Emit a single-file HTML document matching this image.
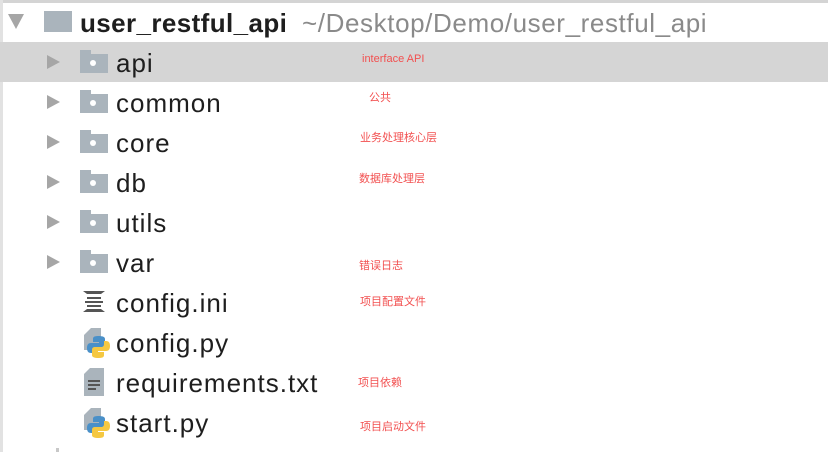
<!DOCTYPE html>
<html><head><meta charset="utf-8"><style>
body{margin:0;width:828px;height:452px;background:#fff;position:relative;overflow:hidden;font-family:"Liberation Sans","Noto Sans CJK SC",sans-serif;}
.top{position:absolute;left:0;top:0;width:828px;height:3px;background:#d4d4d4}
.left{position:absolute;left:0;top:0;width:3px;height:452px;background:#e2e2e2}
.hl{position:absolute;left:0;top:42px;width:828px;height:40px;background:#d5d5d5}
.row{position:absolute;height:40px;line-height:40px;font-size:26px;letter-spacing:1px;color:#1e1e1e;white-space:nowrap}
.tri{position:absolute;width:0;height:0;border-top:7px solid transparent;border-bottom:7px solid transparent;border-left:13px solid #a6a6a6}
.fold{position:absolute;width:28px;height:19px;background:#aab4bc}
.fold:before{content:"";position:absolute;left:0;top:-4px;width:11px;height:5px;background:#aab4bc}
.fold i{position:absolute;left:10px;top:6px;width:6px;height:6px;border-radius:50%;background:#fff}
.ann{position:absolute;font-size:11px;color:#f25050}
</style></head><body>
<div class="top"></div><div class="left"></div><div class="hl"></div>
<div style="position:absolute;left:8px;top:14px;width:0;height:0;border-left:8px solid transparent;border-right:8px solid transparent;border-top:15px solid #a6a6a6"></div>
<div style="position:absolute;left:44px;top:11px;width:28px;height:21px;background:#aab4bc"></div>
<div class="row" style="left:80px;top:3px;font-weight:bold;letter-spacing:0.4px">user_restful_api</div>
<div class="row" style="left:302px;top:3px;color:#8a8a8a;letter-spacing:0.6px">~/Desktop/Demo/user_restful_api</div>

<div class="tri" style="left:47px;top:55px"></div><div class="fold" style="left:80px;top:54px"><i></i></div><div class="row" style="left:116px;top:43px">api</div>
<div class="tri" style="left:47px;top:95px"></div><div class="fold" style="left:80px;top:94px"><i></i></div><div class="row" style="left:116px;top:83px">common</div>
<div class="tri" style="left:47px;top:135px"></div><div class="fold" style="left:80px;top:134px"><i></i></div><div class="row" style="left:116px;top:123px">core</div>
<div class="tri" style="left:47px;top:175px"></div><div class="fold" style="left:80px;top:174px"><i></i></div><div class="row" style="left:116px;top:163px">db</div>
<div class="tri" style="left:47px;top:215px"></div><div class="fold" style="left:80px;top:214px"><i></i></div><div class="row" style="left:116px;top:203px">utils</div>
<div class="tri" style="left:47px;top:255px"></div><div class="fold" style="left:80px;top:254px"><i></i></div><div class="row" style="left:116px;top:243px">var</div>

<svg style="position:absolute;left:82px;top:290px" width="26" height="24"><path d="M1 1h22l-4 3H5z M5 7h14v2H5z M3 11h18v2H3z M5 15h14v2H5z M1 22h22l-4-3H5z" fill="#555"/></svg>
<div class="row" style="left:116px;top:283px">config.ini</div>

<svg style="position:absolute;left:84px;top:328px" width="28" height="30"><path d="M7 0h10v22H0V7z" fill="#aab4bc"/><path d="M14 8c-5 0-5 2-5 3v3h6v1H7c-3 0-4 2-4 5s1 5 4 5h2v-3c0-2 1-3 3-3h6c2 0 3-1 3-3v-5c0-2-2-3-7-3z" fill="#4a90c8"/><path d="M15 30c5 0 5-2 5-3v-3h-6v-1h8c3 0 4-2 4-5s-1-5-4-5h-2v3c0 2-1 3-3 3h-6c-2 0-3 1-3 3v5c0 2 2 3 7 3z" fill="#f5c842"/></svg>
<div class="row" style="left:116px;top:323px">config.py</div>

<svg style="position:absolute;left:84px;top:368px" width="22" height="28"><path d="M6 0h14v28H0V6z" fill="#aab4bc"/><path d="M4 12h12v2H4zM4 16h12v2H4zM4 20h8v2H4z" fill="#555"/></svg>
<div class="row" style="left:116px;top:363px">requirements.txt</div>

<svg style="position:absolute;left:84px;top:408px" width="28" height="30"><path d="M7 0h10v22H0V7z" fill="#aab4bc"/><path d="M14 8c-5 0-5 2-5 3v3h6v1H7c-3 0-4 2-4 5s1 5 4 5h2v-3c0-2 1-3 3-3h6c2 0 3-1 3-3v-5c0-2-2-3-7-3z" fill="#4a90c8"/><path d="M15 30c5 0 5-2 5-3v-3h-6v-1h8c3 0 4-2 4-5s-1-5-4-5h-2v3c0 2-1 3-3 3h-6c-2 0-3 1-3 3v5c0 2 2 3 7 3z" fill="#f5c842"/></svg>
<div class="row" style="left:116px;top:403px">start.py</div>
<div style="position:absolute;left:56px;top:448px;width:3px;height:4px;background:#c8c8c8"></div>

<div class="ann" style="left:362px;top:53px">interface API</div>
<div class="ann" style="left:369px;top:89px">公共</div>
<div class="ann" style="left:360px;top:129px">业务处理核心层</div>
<div class="ann" style="left:359px;top:170px">数据库处理层</div>
<div class="ann" style="left:359px;top:257px">错误日志</div>
<div class="ann" style="left:360px;top:293px">项目配置文件</div>
<div class="ann" style="left:358px;top:374px">项目依赖</div>
<div class="ann" style="left:360px;top:418px">项目启动文件</div>
</body></html>
